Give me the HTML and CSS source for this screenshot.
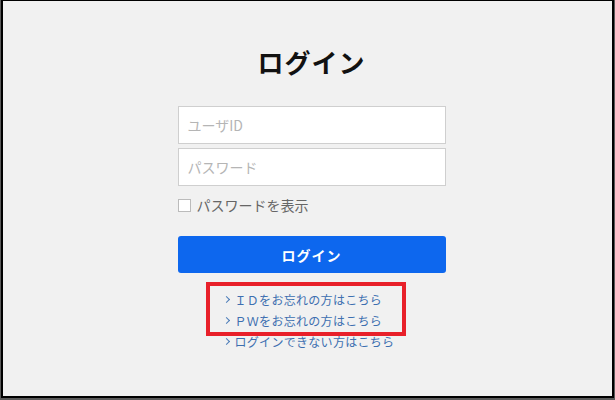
FILE: index.html
```html
<!DOCTYPE html>
<html lang="ja">
<head>
  <meta charset="UTF-8">
  <meta name="viewport" content="width=device-width, initial-scale=1.0">
  <title>ログイン</title>
  <link rel="stylesheet" href="styles.css">
</head>
<body>
  <div class="frame">
    <div class="container">
      <h1>ログイン</h1>
      <form id="loginForm">
        <input type="text" class="field" placeholder="ユーザID">
        <input type="password" class="field" placeholder="パスワード">
        <label class="show-pass">
          <input type="checkbox">
          <span>パスワードを表示</span>
        </label>
        <button type="submit">ログイン</button>
      </form>
      <ul class="links">
        <li><a href="#">ＩＤをお忘れの方はこちら</a></li>
        <li><a href="#">ＰＷをお忘れの方はこちら</a></li>
        <li><a href="#">ログインできない方はこちら</a></li>
      </ul>
    </div>
    <div class="highlight"></div>
  </div>
</body>
</html>
```

FILE: styles.css
```css
body {
  margin: 0;
  background: #5a5a5a;
  font-family: "Noto Sans CJK JP", "Noto Sans", sans-serif;
}
.frame {
  position: relative;
  box-sizing: border-box;
  width: 613px;
  height: 398px;
  margin: 0 1px 2px 1px;
  padding: 1px 0 0 8px;
  border: 2px solid #000;
  border-top-width: 1px;
  background: #f1f1f1;
}
.container {
  width: 268px;
  margin: 0 auto;
}
h1 {
  margin: 42px 0 26px;
  font-size: 26px;
  line-height: 36px;
  font-weight: 700;
  letter-spacing: 1px;
  text-align: center;
  color: #111;
}
form {
  display: flex;
  flex-direction: column;
}
.field {
  box-sizing: border-box;
  height: 38px;
  margin-bottom: 4px;
  padding: 0 9px;
  border: 1px solid #cfcfcf;
  background: #fff;
  font-family: inherit;
  font-size: 14px;
  outline: none;
}
.field::placeholder {
  color: #b5b5b5;
}
.show-pass {
  display: flex;
  align-items: center;
  gap: 6px;
  margin: 1px 0 0;
  height: 28px;
  font-size: 14px;
  color: #666;
}
.show-pass input {
  width: 13px;
  height: 13px;
  margin: 0;
  appearance: none;
  border: 1px solid #bbb;
  background: #fff;
}
button {
  height: 37px;
  margin-top: 17px;
  border: none;
  border-radius: 3px;
  background: #0d67ee;
  color: #fff;
  font-family: inherit;
  font-size: 14px;
  font-weight: 700;
  letter-spacing: 1px;
}
.links {
  list-style: none;
  margin: 16px 0 0;
  padding: 0 0 0 46px;
}
.links li {
  height: 21px;
  line-height: 21px;
  font-size: 12px;
  letter-spacing: 0.3px;
}
.links li::before {
  content: "";
  display: inline-block;
  width: 4px;
  height: 4px;
  margin: 0 6px 3px 0;
  border-top: 1px solid #4a7bb8;
  border-right: 1px solid #4a7bb8;
  transform: rotate(45deg);
}
.links a {
  color: #3d6fb0;
  text-decoration: none;
}
.highlight {
  position: absolute;
  left: 203px;
  top: 281px;
  width: 192px;
  height: 46px;
  border: 4px solid #e8202a;
}
```
